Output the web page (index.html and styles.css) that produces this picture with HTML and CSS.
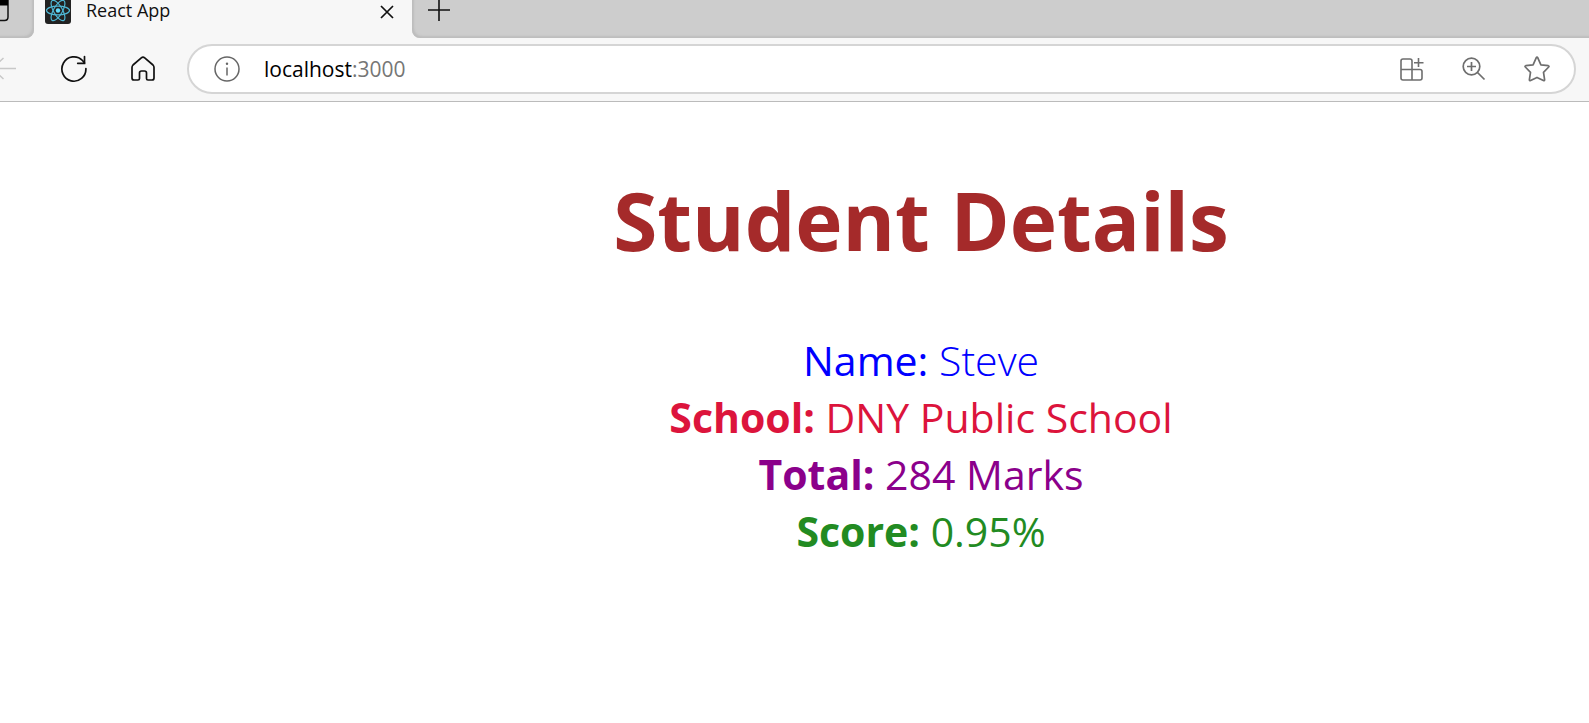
FILE: index.html
```html
<!DOCTYPE html>
<html lang="en">
<head>
<meta charset="utf-8">
<title>React App</title>
<link rel="stylesheet" href="styles.css">
</head>
<body>
<header class="browser">
  <div class="tabs">
    <button class="tab-actions" aria-label="Tab actions">
      <svg width="34" height="38" viewBox="0 0 34 38"><path d="M-10 0H8V17q0 3.500-3.500 3.500H-10" fill="none" stroke="#111" stroke-width="1.500"/><path d="M0 0H8V5.500H0z" fill="#000"/></svg>
    </button>
    <div class="tab">
      <svg class="favicon" width="26" height="24" viewBox="0 0 26 24">
        <path d="M0 0H26V21q0 3-3 3H3q-3 0-3-3z" fill="#222"/>
        <g fill="none" stroke="#4fb8d6" stroke-width="1.200">
          <ellipse cx="13" cy="10.500" rx="11.500" ry="4.400"/>
          <ellipse cx="13" cy="10.500" rx="11.500" ry="4.400" transform="rotate(60 13 10.500)"/>
          <ellipse cx="13" cy="10.500" rx="11.500" ry="4.400" transform="rotate(120 13 10.500)"/>
        </g>
        <circle cx="13" cy="10.500" r="2.200" fill="#61dafb"/>
      </svg>
      <span class="tab-title">React App</span>
      <button class="tab-close" aria-label="Close tab">
        <svg width="14" height="14" viewBox="0 0 14 14"><path d="M1 1L13 13M13 1L1 13" stroke="#111" stroke-width="1.700"/></svg>
      </button>
    </div>
    <div class="strip">
      <button class="new-tab" aria-label="New tab">
        <svg width="22" height="22" viewBox="0 0 22 22"><path d="M0 10H22M11 0V21" stroke="#111" stroke-width="1.600"/></svg>
      </button>
    </div>
  </div>
  <div class="toolbar">
    <nav class="nav">
      <button class="back" aria-label="Back">
        <svg width="16" height="26" viewBox="0 0 16 26"><path d="M0 12.500H16M-8 12.500L3.500 2M-8 12.500L3.500 23" fill="none" stroke="#c8c8c8" stroke-width="1.500"/></svg>
      </button>
      <button class="reload" aria-label="Reload">
        <svg width="28" height="28" viewBox="0 0 28 28"><path d="M25.900 13.500A12 12.200 0 1 1 22.500 5.500L24.500 8" fill="none" stroke="#111" stroke-width="1.700" stroke-linecap="round"/><path d="M24.500 1.500V8.300H17.700" fill="none" stroke="#111" stroke-width="1.700" stroke-linecap="round"/></svg>
      </button>
      <button class="home" aria-label="Home">
        <svg width="24" height="26" viewBox="0 0 24 26"><path d="M1 11.500q0-1.500 1-2.500L10.300 1.800q1.700-1.500 3.400 0L22 9q1 1 1 2.500V22q0 2-2 2H17q-1.500 0-1.500-1.500V17q0-2-2-2H10.500q-2 0-2 2V22.500Q8.500 24 7 24H3q-2 0-2-2z" fill="none" stroke="#111" stroke-width="1.700" stroke-linejoin="round"/></svg>
      </button>
    </nav>
    <div class="address">
      <button aria-label="Site information">
        <svg width="26" height="26" viewBox="0 0 26 26"><circle cx="13" cy="13" r="12" fill="none" stroke="#666" stroke-width="1.500"/><circle cx="13" cy="7.700" r="1.200" fill="#666"/><path d="M13 11.500V19.500" stroke="#666" stroke-width="1.500"/></svg>
      </button>
      <div class="url">localhost<span class="port">:3000</span></div>
      <div class="actions">
        <button aria-label="Apps">
          <svg width="24" height="24" viewBox="0 0 24 24" fill="none" stroke="#6e6e6e" stroke-width="1.600"><path d="M12 12.500V4q0-2-2-2H3Q1 2 1 4V21q0 2 2 2H20q2 0 2-2V14.500q0-2-2-2H1M12 12.500V23M18.500 1V10M14 5.700H23.500"/></svg>
        </button>
        <button aria-label="Zoom">
          <svg width="24" height="24" viewBox="0 0 24 24" fill="none" stroke="#6e6e6e" stroke-width="1.700"><circle cx="9.500" cy="9.500" r="8.300"/><path d="M15.500 15.500L22.500 22.500M9.500 5V14M5 9.500H14"/></svg>
        </button>
        <button aria-label="Add to favorites">
          <svg width="26" height="26" viewBox="0 0 26 26" fill="none" stroke="#6e6e6e" stroke-width="1.700" stroke-linejoin="round"><path d="M12.200 1.800q.8-1.300 1.600 0L16.900 8.900L24.300 9.700q1.200.3.400 1.300L19.500 16.300L20.600 23.700q0 1.300-1.200.8L13 21.400L6.600 24.500q-1.200.5-1.200-.8L6.500 16.300L1.300 11Q.500 10 1.700 9.700L9.100 8.900z"/></svg>
        </button>
      </div>
    </div>
  </div>
</header>
<main class="page">
  <h1 class="heading">Student Details</h1>
  <div class="name"><b>Name:</b> <span>Steve</span></div>
  <div class="school"><b>School:</b> <span>DNY Public School</span></div>
  <div class="total"><b>Total:</b> <span>284 Marks</span></div>
  <div class="score"><b>Score:</b> <span>0.95%</span></div>
</main>
</body>
</html>
```
FILE: styles.css
```css
* { box-sizing: border-box; }
body {
  margin: 0;
  background: #fff;
  font-family: "Open Sans", "Noto Sans", sans-serif;
}
button {
  display: block;
  padding: 0;
  border: 0;
  background: none;
  font: inherit;
}
svg { display: block; }
.browser {
  background: #f7f7f7;
  border-bottom: 1px solid #bbb;
}
.tabs {
  display: flex;
  height: 38px;
}
.tab-actions {
  width: 34px;
  overflow: hidden;
  background: #cdcdcd;
  border-radius: 0 0 8px 0;
  box-shadow: inset -2px -2px 2px #bdbdbd;
}
.tab {
  display: flex;
  align-items: flex-start;
  width: 378px;
  padding: 0 18px 0 11px;
}
.tab-title {
  margin-left: 15px;
  font-size: 18px;
  line-height: 21px;
  color: #111;
}
.tab-close {
  margin: 5px 0 0 auto;
}
.strip {
  flex: 1;
  background: #cdcdcd;
  border-radius: 0 0 0 8px;
  box-shadow: inset 2px -2px 2px #bdbdbd;
}
.new-tab { margin-left: 16px; }
.toolbar {
  display: flex;
  align-items: center;
  padding: 6px 13px 7px 0;
}
.nav {
  display: flex;
  align-items: center;
  width: 187px;
}
.reload { margin-left: 44px; }
.home { margin-left: 43px; }
.address {
  display: flex;
  flex: 1;
  align-items: center;
  height: 50px;
  padding: 0 24px 0 25px;
  background: #fff;
  border: 2px solid #d5d5d5;
  border-radius: 25px;
}
.url {
  flex: 1;
  margin-left: 24px;
  font-size: 21px;
  line-height: 30px;
  color: #000;
}
.port { color: #767676; }
.actions {
  display: flex;
  align-items: center;
  gap: 38px;
}
.page {
  padding: 61px 0 54px 253px;
  font-size: 41px;
  line-height: 57px;
  text-align: center;
}
.heading {
  margin: 0 0 55px;
  font-size: 80px;
  font-weight: 700;
  line-height: 114px;
  color: brown;
}
.name { color: blue; }
.name b { font-weight: 400; }
.name span { font-weight: 300; }
.school { color: crimson; }
.total { color: darkmagenta; }
.score { color: forestgreen; }
```
